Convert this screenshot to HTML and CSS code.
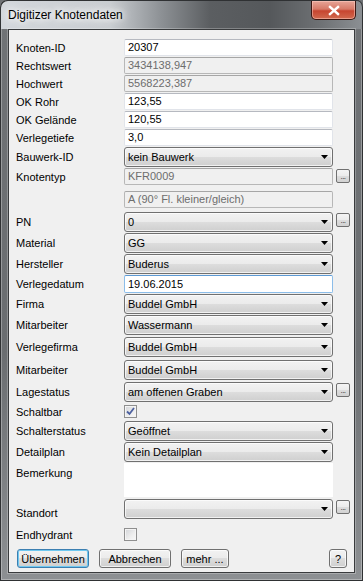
FILE: index.html
```html
<!DOCTYPE html>
<html lang="de">
<head>
  <meta charset="UTF-8">
  <meta name="viewport" content="width=device-width, initial-scale=1.0">
  <title>Digitizer Knotendaten</title>
  <link rel="stylesheet" href="styles.css">
</head>
<body>

  <div class="window">
    <div class="titlebar">
      <span class="title">Digitizer Knotendaten</span>
      <div class="close">
        <svg width="14" height="11" viewBox="0 0 14 11">
          <path d="M3 2 L11 9 M11 2 L3 9" stroke="#fff" stroke-width="2.4" stroke-linecap="square"/>
        </svg>
      </div>
    </div>

    <div class="client">
      <div class="form">
        <div class="row"><label>Knoten-ID</label><div class="edit">20307</div></div>
        <div class="row"><label>Rechtswert</label><div class="edit ro">3434138,947</div></div>
        <div class="row"><label>Hochwert</label><div class="edit ro">5568223,387</div></div>
        <div class="row"><label>OK Rohr</label><div class="edit">123,55</div></div>
        <div class="row"><label>OK Gelände</label><div class="edit">120,55</div></div>
        <div class="row"><label>Verlegetiefe</label><div class="edit">3,0</div></div>
        <div class="row"><label>Bauwerk-ID</label><div class="combo">kein Bauwerk</div></div>
        <div class="row"><label>Knotentyp</label><div class="edit ro">KFR0009</div><div class="dots">...</div></div>
        <div class="row m6"><label></label><div class="edit ro">A (90° Fl. kleiner/gleich)</div></div>
        <div class="row m4"><label>PN</label><div class="combo">0</div><div class="dots">...</div></div>
        <div class="row"><label>Material</label><div class="combo">GG</div></div>
        <div class="row"><label>Hersteller</label><div class="combo">Buderus</div></div>
        <div class="row"><label>Verlegedatum</label><div class="edit date">19.06.2015</div></div>
        <div class="row"><label>Firma</label><div class="combo">Buddel GmbH</div></div>
        <div class="row"><label>Mitarbeiter</label><div class="combo">Wassermann</div></div>
        <div class="row m2"><label>Verlegefirma</label><div class="combo">Buddel GmbH</div></div>
        <div class="row m3"><label>Mitarbeiter</label><div class="combo">Buddel GmbH</div></div>
        <div class="row m2"><label>Lagestatus</label><div class="combo">am offenen Graben</div><div class="dots">...</div></div>
        <div class="row m3"><label>Schaltbar</label>
          <div class="checkbox">
            <svg width="11" height="11" viewBox="0 0 11 11">
              <path d="M2 5.5 L4.5 8 L9 2" fill="none" stroke="#4d61a0" stroke-width="1.8"/>
            </svg>
          </div>
        </div>
        <div class="row m3"><label>Schalterstatus</label><div class="combo">Geöffnet</div></div>
        <div class="row"><label>Detailplan</label><div class="combo">Kein Detailplan</div></div>
        <div class="row top"><label>Bemerkung</label><div class="memo"></div></div>
        <div class="row m2"><label class="low">Standort</label><div class="combo"></div><div class="dots">...</div></div>
        <div class="row m9"><label>Endhydrant</label><div class="checkbox"></div></div>
      </div>

      <div class="buttons">
        <button class="default">Übernehmen</button>
        <button>Abbrechen</button>
        <button class="small">mehr ...</button>
        <button class="help">?</button>
      </div>
    </div>
  </div>

</body>
</html>
```

FILE: styles.css
```css
body {
  margin: 0;
  font-family: 'Liberation Sans', Arial, sans-serif;
  font-size: 11px;
  color: #000;
  background: #6f7275;
}

.window {
  width: 363px;
  height: 581px;
  box-sizing: border-box;
  padding: 0 8px 8px 8px;
  display: flex;
  flex-direction: column;
  border-radius: 7px 7px 0 0;
  background: linear-gradient(to bottom, #707376 0%, #6a6d70 60%, #8d9093 100%);
  box-shadow: inset 0 0 0 1px #2f3133, inset 0 0 0 2px rgba(255, 255, 255, 0.3);
}

.titlebar {
  height: 29px;
  margin: 0 -8px;
  padding: 0 7px 0 8px;
  display: flex;
  align-items: flex-start;
  justify-content: space-between;
  border-radius: 7px 7px 0 0;
  background: linear-gradient(to right, #d3d7dc 0%, #c9cdd1 110px, #8e9296 160px, #5b5e61 210px, #55585b 270px, #6e7174 320px, #8c9094 363px);
  box-shadow: inset 1px 1px 0 #2f3133, inset -1px 0 0 #2f3133;
}

.title {
  margin-top: 8px;
  font-size: 12px;
  color: #000;
  text-shadow: 0 0 6px #fff, 0 0 10px #fff, 0 0 14px #fff;
}

.close {
  width: 45px;
  height: 19px;
  margin-top: 1px;
  box-sizing: border-box;
  display: flex;
  align-items: center;
  justify-content: center;
  border: 1px solid #3d1712;
  border-top: none;
  border-radius: 0 0 5px 5px;
  background: linear-gradient(to bottom, #e7a598 0%, #d77a68 45%, #c74530 55%, #d26a4f 100%);
  box-shadow: inset 0 0 0 1px rgba(255, 210, 200, 0.5);
}

.client {
  flex: 1;
  background: #f0f0f0;
  border: 1px solid #393b3d;
  padding: 9px 7px 0 7px;
  box-shadow: 0 0 0 1px rgba(255, 255, 255, 0.25);
}

.form {
  display: flex;
  flex-direction: column;
}

.row {
  display: grid;
  grid-template-columns: 105px 209px 14px;
  column-gap: 3px;
  align-items: center;
  margin-top: 1px;
}

.row:first-child { margin-top: 0; }
.row.m2 { margin-top: 2px; }
.row.m3 { margin-top: 3px; }
.row.m4 { margin-top: 4px; }
.row.m6 { margin-top: 6px; }
.row.m9 { margin-top: 9px; }
.row.top { align-items: start; }
.row.top label { padding-top: 4px; }

label {
  white-space: nowrap;
}

label.low {
  padding-top: 7px;
}

.edit {
  height: 17px;
  box-sizing: border-box;
  padding: 0 3px;
  line-height: 15px;
  background: #fff;
  border: 1px solid #e1e4ea;
  border-top-color: #b6b9c0;
  border-radius: 2px;
  white-space: nowrap;
  overflow: hidden;
}

.edit.ro {
  background: #f0f0f0;
  color: #6d6d6d;
  border-color: #b7b7b7;
  border-top-color: #a6a6a6;
}

.edit.date {
  height: 18px;
  line-height: 16px;
  border-color: #8cbde9;
  border-top-color: #5d9ad4;
}

.combo {
  position: relative;
  height: 20px;
  box-sizing: border-box;
  padding: 0 3px;
  line-height: 18px;
  border: 1px solid #707070;
  border-radius: 3px;
  background: linear-gradient(to bottom, #f2f2f2 0%, #ebebeb 50%, #dddddd 50%, #cfcfcf 100%);
  box-shadow: inset 0 0 0 1px rgba(255, 255, 255, 0.7);
  white-space: nowrap;
}

.combo::after {
  content: "";
  position: absolute;
  right: 4px;
  top: 7px;
  width: 7px;
  height: 4px;
  background: #000;
  clip-path: polygon(0 0, 100% 0, 50% 100%);
}

.dots {
  align-self: start;
  margin-top: 1px;
  width: 14px;
  height: 14px;
  box-sizing: border-box;
  border: 1px solid #707070;
  border-radius: 2px;
  background: linear-gradient(to bottom, #f4f4f4 0%, #ebebeb 50%, #dddddd 50%, #d2d2d2 100%);
  font-size: 8px;
  line-height: 14px;
  text-align: center;
  color: #222;
  letter-spacing: -0.5px;
}

.checkbox {
  width: 13px;
  height: 13px;
  box-sizing: border-box;
  border: 1px solid #8f8f8f;
  background: linear-gradient(135deg, #d2d4d8 0%, #eeeeee 60%, #f8f8f8 100%);
  box-shadow: inset 0 0 0 1px #f4f4f4;
  display: flex;
  align-items: center;
  justify-content: center;
}

.memo {
  height: 34px;
  background: #fff;
}

.buttons {
  display: flex;
  gap: 10px;
  margin-top: 8px;
  padding-left: 1px;
}

button {
  height: 19px;
  width: 72px;
  padding: 0;
  font-family: 'Liberation Sans', Arial, sans-serif;
  font-size: 11px;
  color: #000;
  border: 1px solid #707070;
  border-radius: 3px;
  background: linear-gradient(to bottom, #f2f2f2 0%, #ebebeb 50%, #dddddd 50%, #cfcfcf 100%);
  box-shadow: inset 0 0 0 1px rgba(255, 255, 255, 0.7);
}

button.default {
  border-color: #3c7fb1;
  box-shadow: inset 0 0 0 1px #6fc8f0;
}

button.small {
  width: 48px;
}

button.help {
  width: 18px;
  margin-left: auto;
  margin-right: 0;
}
```
